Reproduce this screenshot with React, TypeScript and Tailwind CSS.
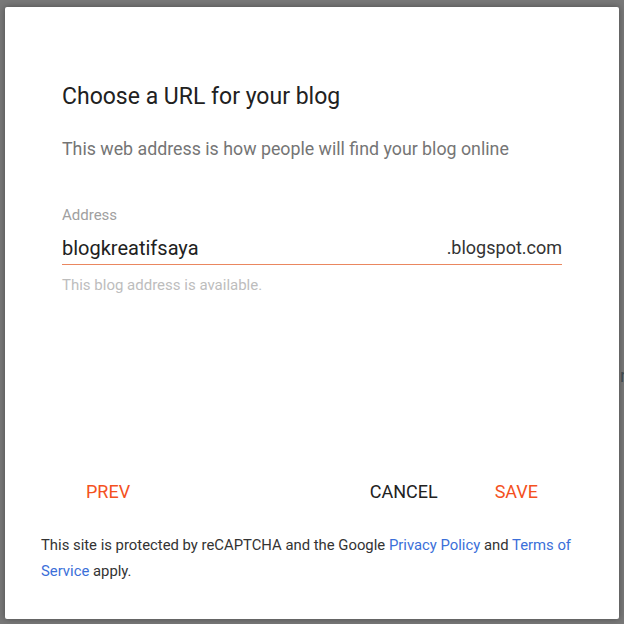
export default function App() {
    return (
        <div className="relative flex h-[624px] w-[624px] overflow-hidden bg-[#787878] pl-[5px] pt-[7px] font-['Roboto',sans-serif]">
            {/* a letter of the page behind the overlay peeks out at the right edge */}
            <span className="absolute left-[620px] top-[364px] text-[18px] leading-[24px] text-[#3d4a4f]" aria-hidden="true">
                r
            </span>

            <div className="flex h-[612px] w-[614px] flex-col rounded-[2px] bg-white shadow-[0_0_6px_rgba(0,0,0,0.35)]">
                <div className="flex flex-col px-[57px] pt-[76px]">
                    <h1 className="text-[23px] leading-[28px] font-normal text-[#212121]">
                        Choose a URL for your blog
                    </h1>
                    <p className="mt-[26px] text-[17.8px] leading-[24px] text-[#757575]">
                        This web address is how people will find your blog online
                    </p>

                    <label className="mt-[44px] text-[15px] leading-[20px] text-[#a0a0a0]">Address</label>
                    <div className="mt-[10px] flex items-end justify-between pb-[3px]">
                        <span className="text-[20px] leading-[26px] text-[#212121]">blogkreatifsaya</span>
                        <span className="text-[18px] leading-[26px] text-[#333333]">.blogspot.com</span>
                    </div>
                    <div className="h-px bg-[#ea8760]" />
                    <p className="mt-[10px] text-[15px] leading-[20px] text-[#bdbdbd]">
                        This blog address is available.
                    </p>
                </div>

                <div className="mt-auto flex items-center px-[57px]">
                    <button className="px-[24px] text-[18px] leading-[36px] font-normal text-[#f4511e]">PREV</button>
                    <div className="flex-1" />
                    <button className="px-[24px] text-[18px] leading-[36px] font-normal text-[#212121]">CANCEL</button>
                    <button className="ml-[9px] px-[24px] text-[18px] leading-[36px] font-normal text-[#f4511e]">SAVE</button>
                </div>

                <p className="mt-[22px] mb-[35px] px-[36px] text-[14.85px] leading-[26px] text-[#333333]">
                    This site is protected by reCAPTCHA and the Google{" "}
                    <a className="text-[#3b6fd9]">Privacy Policy</a> and{" "}
                    <a className="text-[#3b6fd9]">Terms of Service</a> apply.
                </p>
            </div>
        </div>
    );
}
